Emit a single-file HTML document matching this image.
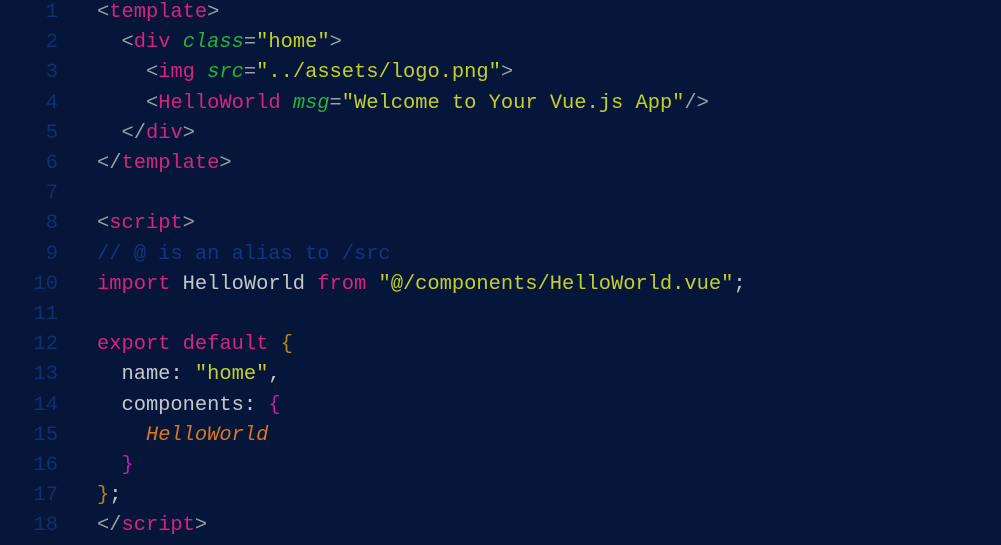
<!DOCTYPE html>
<html><head><style>
html,body{margin:0;padding:0;background:#06163a;width:1001px;height:545px;overflow:hidden}
pre{margin:0;position:absolute;top:-2px;font-family:"Liberation Mono","DejaVu Sans Mono",monospace;font-size:20.4px;line-height:30.2px}
.n{left:0;width:58px;text-align:right;color:#12306a}
.c{left:97px;color:#c4c8cc}
.p{color:#d6247e}.b{color:#98a0a8}.a{color:#22b33a;font-style:italic}.s{color:#c2d02a}
.o{color:#d9781a;font-style:italic}.g{color:#b8861a}.m{color:#c51fa8}.cm{color:#16357a}
</style></head><body>
<pre class="n">1
2
3
4
5
6
7
8
9
10
11
12
13
14
15
16
17
18</pre>
<pre class="c"><span class="b">&lt;</span><span class="p">template</span><span class="b">&gt;</span>
  <span class="b">&lt;</span><span class="p">div</span> <span class="a">class</span><span class="b">=</span><span class="s">"home"</span><span class="b">&gt;</span>
    <span class="b">&lt;</span><span class="p">img</span> <span class="a">src</span><span class="b">=</span><span class="s">"../assets/logo.png"</span><span class="b">&gt;</span>
    <span class="b">&lt;</span><span class="p">HelloWorld</span> <span class="a">msg</span><span class="b">=</span><span class="s">"Welcome to Your Vue.js App"</span><span class="b">/&gt;</span>
  <span class="b">&lt;/</span><span class="p">div</span><span class="b">&gt;</span>
<span class="b">&lt;/</span><span class="p">template</span><span class="b">&gt;</span>

<span class="b">&lt;</span><span class="p">script</span><span class="b">&gt;</span>
<span class="cm">// @ is an alias to /src</span>
<span class="p">import</span> HelloWorld <span class="p">from</span> <span class="s">"@/components/HelloWorld.vue"</span>;

<span class="p">export</span> <span class="p">default</span> <span class="g">{</span>
  name: <span class="s">"home"</span>,
  components: <span class="m">{</span>
    <span class="o">HelloWorld</span>
  <span class="m">}</span>
<span class="g">}</span>;
<span class="b">&lt;/</span><span class="p">script</span><span class="b">&gt;</span></pre>
</body></html>
